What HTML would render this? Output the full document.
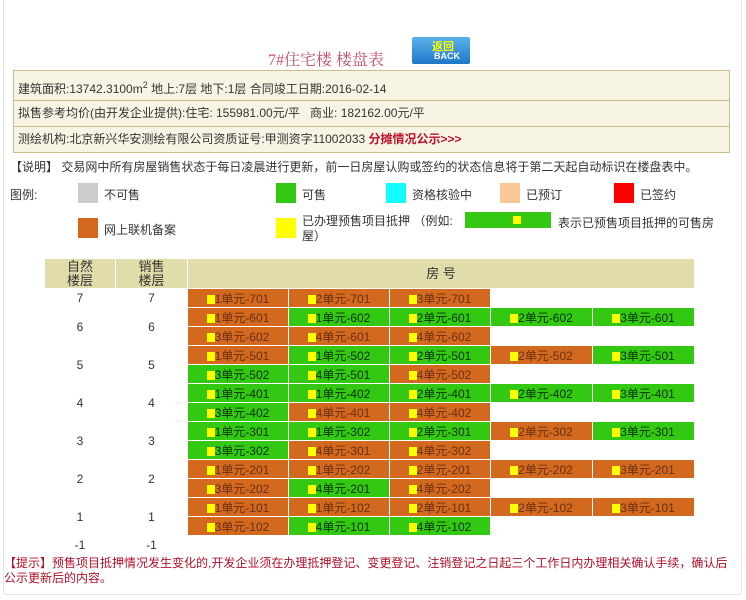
<!DOCTYPE html>
<html><head><meta charset="utf-8"><style>
body{margin:0;width:746px;height:600px;background:#fff;font-family:"Liberation Sans","Noto Sans CJK SC",sans-serif;font-size:12px;color:#333;position:relative;overflow:hidden}
.a{position:absolute;white-space:nowrap}
.frame{position:absolute;left:3px;top:0;width:737px;height:594px;border:1px solid #e4e4e4;border-top:none;border-radius:0 0 4px 4px}
.info{position:absolute;left:13px;top:70px;width:715px;background:#f8f4e4;border:1px solid #cbbd8f}
.info div{height:25px;line-height:25px;padding-left:4px;border-bottom:1px solid #cbbd8f;font-size:12px}
.info div:last-child{border-bottom:none}
.sw{position:absolute;width:20px;height:20px}
table{position:absolute;left:44px;top:258px;border-collapse:collapse;table-layout:fixed;width:650px}
td{padding:0;height:18px;border:1px solid #fff;font-size:12px;text-align:center;overflow:hidden;white-space:nowrap}
th{background:#e1ddaa;font-weight:normal;color:#333;border:1px solid #fff;height:29px;font-size:13px;line-height:14px;padding:0}
td.o{background:#d2691e;color:#6a3010}
td.g{background:#33c812;color:#0a3300}
td i{display:inline-block;width:8px;height:9px;background:#ff0;vertical-align:-1px}
</style></head><body>
<div class="frame"></div>
<div class="a" style="left:268px;top:47px;font-family:'Liberation Serif','Noto Serif CJK SC',serif;font-size:16px;color:#c0506a">7#住宅楼 楼盘表</div>
<div class="a" style="left:412px;top:37px;width:58px;height:27px;background:linear-gradient(#5ab0ea,#1f78c8);border-radius:2px">
<div class="a" style="left:20px;top:1px;color:#ff0;font-weight:bold;font-size:11px">返回</div>
<div class="a" style="left:22px;top:14px;color:#fff;font-weight:bold;font-size:9px">BACK</div></div>
<div class="info">
<div style="height:29px;line-height:29px">建筑面积:13742.3100m<sup style="font-size:9px">2</sup> 地上:7层 地下:1层 合同竣工日期:2016-02-14</div>
<div>拟售参考均价(由开发企业提供):住宅: 155981.00元/平&nbsp;&nbsp; 商业: 182162.00元/平</div>
<div>测绘机构:北京新兴华安测绘有限公司资质证号:甲测资字11002033 <b style="color:#c0102a">分摊情况公示&gt;&gt;&gt;</b></div>
</div>
<div class="a" style="left:10px;top:158px">【说明】 交易网中所有房屋销售状态于每日凌晨进行更新，前一日房屋认购或签约的状态信息将于第二天起自动标识在楼盘表中。</div>
<div class="a" style="left:10px;top:186px">图例:</div>
<div class="sw" style="left:78px;top:183px;background:#ccc"></div><div class="a" style="left:104px;top:186px">不可售</div>
<div class="sw" style="left:276px;top:183px;background:#33c812"></div><div class="a" style="left:302px;top:186px">可售</div>
<div class="sw" style="left:386px;top:183px;background:#1ff"></div><div class="a" style="left:412px;top:186px">资格核验中</div>
<div class="sw" style="left:500px;top:183px;background:#f8c898"></div><div class="a" style="left:526px;top:186px">已预订</div>
<div class="sw" style="left:614px;top:183px;background:#f00"></div><div class="a" style="left:640px;top:186px">已签约</div>
<div class="sw" style="left:78px;top:218px;background:#d2691e"></div><div class="a" style="left:104px;top:221px">网上联机备案</div>
<div class="sw" style="left:276px;top:218px;background:#ff0"></div><div class="a" style="left:302px;top:214px;line-height:15px;white-space:normal;width:160px">已办理预售项目抵押 （例如:<br>屋）</div>
<div class="a" style="left:465px;top:212px;width:86px;height:16px;background:#33c812"><div class="a" style="left:48px;top:4px;width:8px;height:8px;background:#ff0"></div></div>
<div class="a" style="left:558px;top:214px">表示已预售项目抵押的可售房</div>
<table>
<colgroup><col style="width:71px"><col style="width:72px"><col style="width:101px"><col style="width:101px"><col style="width:101px"><col style="width:102px"><col style="width:102px"></colgroup>
<tr><th>自然<br>楼层</th><th>销售<br>楼层</th><th colspan="5">房 号</th></tr>
<tr><td>7</td><td>7</td><td class="o"><i></i>1单元-701</td><td class="o"><i></i>2单元-701</td><td class="o"><i></i>3单元-701</td><td></td><td></td></tr>
<tr><td rowspan="2">6</td><td rowspan="2">6</td><td class="o"><i></i>1单元-601</td><td class="g"><i></i>1单元-602</td><td class="g"><i></i>2单元-601</td><td class="g"><i></i>2单元-602</td><td class="g"><i></i>3单元-601</td></tr>
<tr><td class="o"><i></i>3单元-602</td><td class="o"><i></i>4单元-601</td><td class="o"><i></i>4单元-602</td><td></td><td></td></tr>
<tr><td rowspan="2">5</td><td rowspan="2">5</td><td class="o"><i></i>1单元-501</td><td class="g"><i></i>1单元-502</td><td class="g"><i></i>2单元-501</td><td class="o"><i></i>2单元-502</td><td class="g"><i></i>3单元-501</td></tr>
<tr><td class="g"><i></i>3单元-502</td><td class="g"><i></i>4单元-501</td><td class="o"><i></i>4单元-502</td><td></td><td></td></tr>
<tr><td rowspan="2">4</td><td rowspan="2">4</td><td class="g"><i></i>1单元-401</td><td class="g"><i></i>1单元-402</td><td class="g"><i></i>2单元-401</td><td class="g"><i></i>2单元-402</td><td class="g"><i></i>3单元-401</td></tr>
<tr><td class="g"><i></i>3单元-402</td><td class="o"><i></i>4单元-401</td><td class="o"><i></i>4单元-402</td><td></td><td></td></tr>
<tr><td rowspan="2">3</td><td rowspan="2">3</td><td class="g"><i></i>1单元-301</td><td class="g"><i></i>1单元-302</td><td class="g"><i></i>2单元-301</td><td class="o"><i></i>2单元-302</td><td class="g"><i></i>3单元-301</td></tr>
<tr><td class="g"><i></i>3单元-302</td><td class="o"><i></i>4单元-301</td><td class="o"><i></i>4单元-302</td><td></td><td></td></tr>
<tr><td rowspan="2">2</td><td rowspan="2">2</td><td class="o"><i></i>1单元-201</td><td class="o"><i></i>1单元-202</td><td class="o"><i></i>2单元-201</td><td class="o"><i></i>2单元-202</td><td class="o"><i></i>3单元-201</td></tr>
<tr><td class="o"><i></i>3单元-202</td><td class="g"><i></i>4单元-201</td><td class="o"><i></i>4单元-202</td><td></td><td></td></tr>
<tr><td rowspan="2">1</td><td rowspan="2">1</td><td class="o"><i></i>1单元-101</td><td class="o"><i></i>1单元-102</td><td class="o"><i></i>2单元-101</td><td class="o"><i></i>2单元-102</td><td class="o"><i></i>3单元-101</td></tr>
<tr><td class="o"><i></i>3单元-102</td><td class="g"><i></i>4单元-101</td><td class="g"><i></i>4单元-102</td><td></td><td></td></tr>
<tr><td>-1</td><td>-1</td><td></td><td></td><td></td><td></td><td></td></tr>
</table>
<div class="a" style="left:4px;top:556px;width:735px;white-space:normal;color:#b0102a;line-height:15px">【提示】预售项目抵押情况发生变化的,开发企业须在办理抵押登记、变更登记、注销登记之日起三个工作日内办理相关确认手续，确认后公示更新后的内容。</div>
</body></html>
